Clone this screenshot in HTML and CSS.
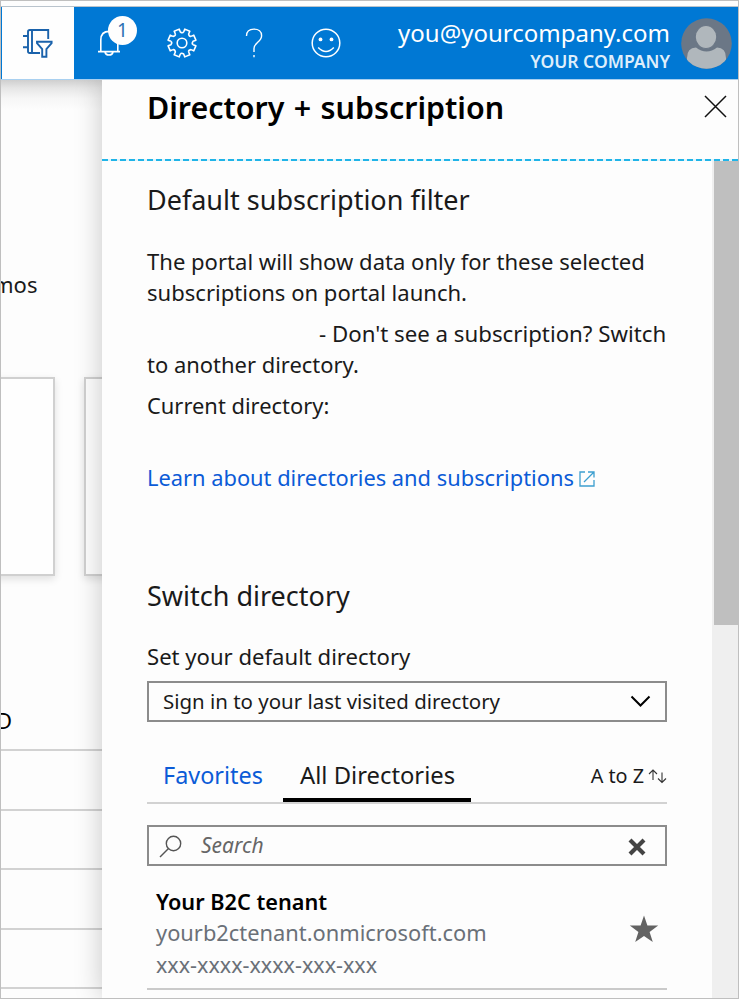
FILE: index.html
```html
<!DOCTYPE html>
<html lang="en">
<head>
<meta charset="utf-8">
<title>Directory + subscription</title>
<link rel="stylesheet" href="styles.css">
</head>
<body>
<div class="window">
  <header class="topbar">
    <div class="tile">
      <svg class="icon-filter" width="32" height="32" viewBox="22 27 32 32" fill="none" stroke="#1a62ab" stroke-width="1.9">
        <path d="M48.2 39V30H29.8Q28 30 28 31.8V51.2Q28 53 29.8 53H40M32 30V53M23 36H28M23 47.3H28"/>
        <path d="M37 41.8H51.6V43.2L46.4 49V56.8H42.2V49L37 43.2Z"/>
      </svg>
    </div>
    <nav class="actions">
      <div class="action bell">
        <svg width="30" height="34" viewBox="96 27 30 34" fill="none" stroke="#fff" stroke-width="1.6">
          <path d="M99 51.6H121M101.8 51V40Q101.8 31.4 110.3 31.4Q118.8 31.4 118.8 40V51M106 52Q106.5 55 110 55Q113.5 55 114 52"/>
        </svg>
        <span class="badge">1</span>
      </div>
      <div class="action">
        <svg width="32" height="32" viewBox="-16 -16 32 32" fill="none" stroke="#fff" stroke-width="1.6" stroke-linejoin="round">
          <defs><path id="tooth" d="M-2.7-10.8L-2.7-13.9H2.7L2.7-10.8Q4.1-8.6 5.73-9.55"/></defs>
          <circle r="4.8"/>
          <use href="#tooth" transform="rotate(22.5)"/><use href="#tooth" transform="rotate(67.5)"/>
          <use href="#tooth" transform="rotate(112.5)"/><use href="#tooth" transform="rotate(157.5)"/>
          <use href="#tooth" transform="rotate(202.5)"/><use href="#tooth" transform="rotate(247.5)"/>
          <use href="#tooth" transform="rotate(292.5)"/><use href="#tooth" transform="rotate(337.5)"/>
        </svg>
      </div>
      <div class="action">
        <svg width="32" height="32" viewBox="238 27.5 32 32" fill="none" stroke="#fff" stroke-width="1.4">
          <path d="M246.5 36.5C246.5 32 249.5 29.6 254 29.6C258.5 29.6 261.6 32.2 261.6 36.2C261.6 42.5 254 43 254 49V52.5M254 55.5V57.8"/>
        </svg>
      </div>
      <div class="action">
        <svg width="32" height="32" viewBox="-16 -16 32 32" fill="none" stroke="#fff" stroke-width="1.5">
          <circle r="13.8"/><path d="M-7.8 4.5Q0 12.5 7.8 4.5"/>
          <circle cx="-5.5" cy="-3.6" r="1.9" fill="#fff" stroke="none"/><circle cx="5.5" cy="-3.6" r="1.9" fill="#fff" stroke="none"/>
        </svg>
      </div>
    </nav>
    <div class="account">
      <div class="email">you@yourcompany.com</div>
      <div class="company">YOUR COMPANY</div>
    </div>
    <svg class="avatar" width="51" height="51" viewBox="0 0 51 51">
      <defs><clipPath id="round"><circle cx="25.5" cy="25.5" r="25.3"/></clipPath></defs>
      <g clip-path="url(#round)">
        <rect width="51" height="51" fill="#6b7786"/>
        <path d="M6 52V40Q6 29.5 15 29.5Q20 33.5 25.500 33.5Q31 33.5 36 29.5Q45 29.5 45 40V52Z" fill="#b0b7bc"/>
        <ellipse cx="25" cy="19" rx="10.8" ry="11.5" fill="#b0b7bc" stroke="#6b7786" stroke-width="1.2"/>
      </g>
    </svg>
  </header>

  <main class="content">
    <section class="dashboard">
      <div class="caption">mos</div>
      <div class="cards"><div class="card first"></div><div class="card second"></div></div>
      <div class="heading">D</div>
      <div class="rows"><div></div><div></div><div></div><div></div><div></div></div>
    </section>

    <aside class="panel">
      <div class="panel-head">
        <h1>Directory + subscription</h1>
        <svg class="close" width="23" height="23" viewBox="0 0 23 23" stroke="#111" stroke-width="1.5"><path d="M1 1L22 22M22 1L1 22"/></svg>
      </div>
      <div class="divider"></div>
      <div class="panel-main">
        <div class="panel-body">
          <h2>Default subscription filter</h2>
          <p class="intro">The portal will show data only for these selected<br>subscriptions on portal launch.</p>
          <p class="hint"><span class="lead">- Don't see a subscription? Switch</span><br>to another directory.</p>
          <p class="current">Current directory:</p>
          <a class="learn">Learn about directories and subscriptions<svg width="16" height="16" viewBox="0 0 16 16" fill="none" stroke="#3d9fcf" stroke-width="1.3"><path d="M6 1H1V15H15V9M9 1H15V6.5M15 1L5 11"/></svg></a>
          <h2 class="switch">Switch directory</h2>
          <div class="label">Set your default directory</div>
          <div class="field select"><span>Sign in to your last visited directory</span>
            <svg width="21" height="13" viewBox="0 0 21 13" fill="none" stroke="#000" stroke-width="2"><path d="M1.5 1.5L10.5 10.5L19.5 1.5"/></svg>
          </div>
          <div class="tabs">
            <div class="tab favorites">Favorites</div>
            <div class="tab active">All Directories</div>
            <div class="sort">A to Z<svg width="19" height="16" viewBox="0 0 19 16" fill="none" stroke="#333" stroke-width="1.1"><path d="M5 12V2M1 6L5 2L9 6M14 4.5V14.5M10 10.5L14 14.5L18 10.5"/></svg></div>
          </div>
          <div class="field search">
            <svg class="lens" width="23" height="23" viewBox="0 0 23 23" fill="none" stroke="#555" stroke-width="1.4"><circle cx="14.5" cy="8.5" r="7.2"/><path d="M9.5 13.5L1 22"/></svg>
            <span>Search</span>
            <svg class="clear" width="18" height="18" viewBox="0 0 18 18" stroke="#444" stroke-width="4.2"><path d="M2 2L16 16M16 2L2 16"/></svg>
          </div>
          <div class="tenant">
            <div>
              <div class="name">Your B2C tenant</div>
              <div class="domain">yourb2ctenant.onmicrosoft.com</div>
              <div class="guid">xxx-xxxx-xxxx-xxx-xxx</div>
            </div>
            <svg class="star" width="30" height="28" viewBox="0 0 30 28"><path fill="#636363" d="M15 .5L18.4 10.5H29.2L20.6 16.9L23.8 27L15 20.9L6.2 27L9.4 16.9L.8 10.5H11.6Z"/></svg>
          </div>
        </div>
        <div class="track"><div class="thumb"></div></div>
      </div>
    </aside>
  </main>
</div>
</body>
</html>
```
FILE: styles.css
```css
* { box-sizing: border-box; }
body { margin: 0; background: #fdfdfd; color: #1a1a1a; font: 22px/31.5px "Noto Sans", "Open Sans", sans-serif; }
h1, h2, p { margin: 0; font-weight: 400; }
svg { display: block; flex: none; }

.window { width: 739px; height: 999px; border: 1px solid #bfbfbf; padding-top: 5px; overflow: hidden; display: flex; flex-direction: column; }

.topbar { height: 74px; flex: none; background: #0078d4; border-top: 1px solid #b9c3cc; border-bottom: 1px solid #a9d0f0; display: flex; position: relative; z-index: 2; }
.tile { width: 73px; background: #fefefe; border-left: 1px solid #0078d4; padding: 20px 0 0 20px; }
.actions { display: flex; padding-left: 20px; }
.action { width: 72px; padding-top: 20px; }
.bell { position: relative; padding-left: 1px; }
.badge { position: absolute; left: 14px; top: 9px; width: 29px; height: 29px; border-radius: 50%; background: #fefefe; color: #2d70b3; font-size: 19px; line-height: 29px; text-align: center; }
.account { margin-left: auto; margin-right: 11px; text-align: right; color: #fff; }
.email { font-size: 24px; line-height: 34px; padding-top: 9px; }
.company { font-size: 17.5px; line-height: 24px; margin-top: -1px; font-weight: 600; color: #deeefb; }
.avatar { margin: 11px 6px 0 0; }

.content { flex: 1; display: flex; min-height: 0; }
.dashboard { width: 101px; flex: none; overflow: hidden; background: linear-gradient(#cfcfcf, #e6e6e6 8px, #f6f6f6 18px, #fdfdfd 30px); }
.caption { margin: 189px 0 0 -8px; }
.cards { display: flex; gap: 29px; margin-top: 76.5px; }
.card { height: 199px; flex: none; border: 2px solid #d0d0d0; background: #fefefe; box-shadow: 0 3px 8px rgba(0,0,0,.12); }
.card.first { width: 64px; margin-left: -10px; }
.card.second { width: 64px; }
.heading { margin: 128px 0 0 -5px; line-height: 32px; color: #000; }
.rows { margin-top: 13px; }
.rows div { height: 59.5px; border-top: 2px solid #d2d2d2; }

.panel { flex: 1; min-width: 0; background: #fdfdfd; box-shadow: 0 0 26px rgba(0,0,0,.22); display: flex; flex-direction: column; }
.panel-head { height: 79px; flex: none; display: flex; justify-content: space-between; padding: 0 11px 0 45px; }
h1 { font-size: 30.4px; line-height: 56px; font-weight: 600; word-spacing: 1.5px; color: #000; }
.close { margin-top: 15px; }
.divider { height: 2px; flex: none; background: repeating-linear-gradient(90deg, #20b4e8 0 6px, #e0f5fc 6px 9px); }
.panel-main { flex: 1; min-height: 0; display: flex; }
.panel-body { width: 610px; padding: 21px 45px 0; white-space: nowrap; }
.track { flex: 1; background: #efefef; padding-left: 2px; }
.thumb { height: 464px; background: #bfbfbf; }

h2 { font-size: 27px; line-height: 36px; }
.intro { margin-top: 28px; line-height: 31px; font-size: 22.05px; }
.hint { margin-top: 10px; line-height: 31px; font-size: 21.95px; }
.lead { margin-left: 172px; font-size: 22.25px; }
.current { margin-top: 10px; font-size: 21.9px; }
.learn { display: flex; align-items: center; gap: 5px; margin-top: 40px; color: #0b5bd7; font-size: 21.85px; }
.learn svg { margin-top: 3px; }
.switch { margin-top: 85px; }
.label { margin-top: 27px; font-size: 22.1px; }
.field { display: flex; align-items: center; height: 41px; border: 2px solid #8c8c8c; }
.field span { padding-top: 2px; }
.select { margin-top: 8px; padding: 0 14px; justify-content: space-between; font-size: 20.45px; }
.tabs { display: flex; margin-top: 30px; height: 52px; border-bottom: 2px solid #d2d2d2; }
.tab { font-size: 23.8px; line-height: 46px; height: 50px; }
.favorites { width: 136px; padding-left: 16px; color: #0b5bd7; font-size: 23.4px; }
.active { width: 188px; padding-left: 17px; border-bottom: 4px solid #000; }
.sort { display: flex; align-items: center; gap: 4px; margin-left: auto; font-size: 19.8px; height: 49px; }
.search { margin-top: 21px; padding: 0 19px 0 10px; }
.search span { margin-left: 19px; font-size: 21px; font-style: italic; color: #666; }
.lens { margin-top: 3px; }
.clear { margin: 3px 0 0 auto; }
.tenant { display: flex; justify-content: space-between; height: 124px; padding: 20px 8px 0 9px; border-bottom: 2px solid #cacaca; }
.name { font-size: 21.7px; font-weight: 600; color: #000; }
.domain, .guid { color: #6a7078; }
.domain { font-size: 21.85px; }
.guid { font-size: 21.5px; }
.star { margin-top: 29px; }
```
